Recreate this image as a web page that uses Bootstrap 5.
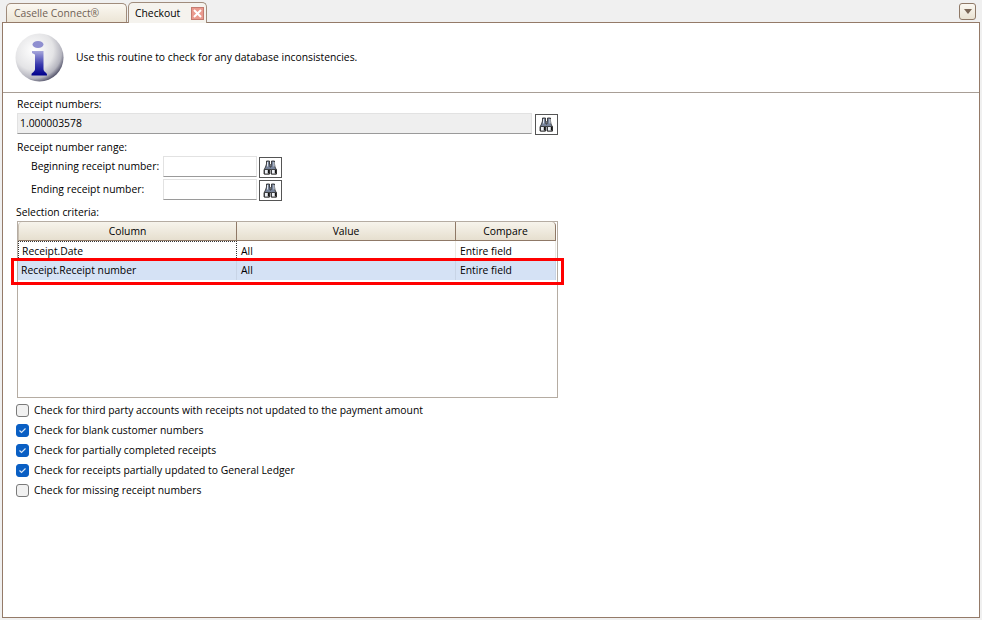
<!DOCTYPE html>
<html lang="en">
<head>
<meta charset="utf-8">
<title>Checkout</title>
<link rel="stylesheet" href="https://cdn.jsdelivr.net/npm/bootstrap@5.3.0/dist/css/bootstrap.min.css">
<style>
html,body{height:620px;overflow:hidden}
body{background:#f0f0f0;font-family:"Open Sans","Noto Sans",sans-serif;font-size:10.35px;line-height:13px;color:#000;padding:2px}
.appshell{height:616px;width:978px}
.tabstrip{height:20px;padding-left:4px;position:relative}
.tabitem{border:1px solid #a08c7c;border-bottom:0;border-radius:5px 5px 0 0}
.tab-off{width:121px;background:linear-gradient(#fbf8f2,#ece5d6);color:#6f6154;margin-top:1px;height:19px;padding:3px 0 0 7px}
.tab-on{width:79px;margin-left:1px;background:#f5f3ee;position:relative;z-index:2;height:21px;padding:4px 0 0 6px}
.tabclose{width:13px;height:13px;background:#ea9a8e;border:1px solid #c47b70;position:absolute;left:62px;top:4px}
.menubtn{width:17px;height:17px;border:1px solid #8f7967;border-radius:3px;background:linear-gradient(#fbf8f2,#e9e2d2);position:absolute;right:4px;top:1px}
.sheet{height:596px;background:#fff;border:1px solid #947a68}
.introband{height:70px;border-bottom:1px solid #a89e96;padding:10px 0 0 12px}
.introrow{gap:12px}
.workarea{padding:5px 0 0 14px;width:557px;position:relative}
.lbl{height:13px;margin:0}
.readrow{margin-top:2px;gap:3px}
.readbox{width:515px;height:21px;background:#efefef;border:1px solid #e2e2e2;border-bottom:1px solid #9a9a9a;padding:3px 0 0 2px}
.findbtn{width:23px;height:21px;padding:0;border:1px solid #555;border-radius:0;background:#fff;display:flex;align-items:center;justify-content:center;margin-top:1px}
.rangehead{margin-top:6px}
.rangerow{padding-left:14px;height:23px}
.rangerow-first{margin-top:2px}
.rangelbl{width:132px;padding-top:4px}
.rangebox{width:94px;height:21px;background:#fff;border:1px solid #e2e2e2;border-bottom:1px solid #9a9a9a;margin-right:2px}
.crithead{margin-top:4px;margin-left:-1px}
.gridframe{width:541px;height:177px;border:1px solid #b5aca2;margin-top:2px;position:relative}
.critgrid{table-layout:fixed;width:538px;border-collapse:separate;border-spacing:0;margin:0}
.critgrid th{height:19px;padding:0;font-weight:400;text-align:center;background:linear-gradient(#f7f4ec,#e6dfcf);border-right:1px solid #8f7967;border-bottom:1px solid #8f7967;vertical-align:middle}
.critgrid th:first-child{border-top-left-radius:4px;border-left:1px solid #c8bfb2}
.critgrid th:last-child{border-top-right-radius:4px}
.critgrid td{height:19px;padding:1px 0 0 4px;vertical-align:middle;border-right:1px solid #ece9e2;background:#fff}
.critgrid td:first-child{padding-left:3px}
.critgrid .firstcell{border:1px dotted #333;padding:1px 0 0 1px}
.critgrid .picked td{background:#d5e2f5;border-right-color:#c8d4e6;height:20px;padding-top:0}
.redmark{position:absolute;left:-7px;top:36px;width:553px;height:27px;border:3px solid #f00;pointer-events:none}
.checklist{margin-top:2px;margin-left:-1px}
.checkline{height:20px;gap:5px}
.checkline .form-check-input{width:13px;height:13px;margin:0;border-radius:3px;border:1px solid #7a7a7a;background-color:#f1f1f1;flex:none;opacity:1}
.checkline .form-check-input:checked{background-color:#0a5fc4;border-color:#0a5fc4;background-size:9px;background-image:url("data:image/svg+xml,%3csvg xmlns='http://www.w3.org/2000/svg' viewBox='0 0 9 9'%3e%3cpath fill='none' stroke='%23d7e6f7' stroke-width='1.2' d='M1.500 4.500l2 2 4-4'/%3e%3c/svg%3e")}
</style>
</head>
<body>
<div class="appshell d-flex flex-column">
  <div class="tabstrip d-flex">
    <div class="tabitem tab-off">Caselle Connect®</div>
    <div class="tabitem tab-on">Checkout
      <span class="tabclose d-flex align-items-center justify-content-center">
        <svg width="9" height="9" viewBox="0 0 9 9"><path d="M1 1l7 7M8 1l-7 7" stroke="#fff" stroke-width="2"/></svg>
      </span>
    </div>
    <div class="menubtn d-flex align-items-center justify-content-center">
      <svg width="8" height="5" viewBox="0 0 8 5"><path d="M0 0h8L4 5z" fill="#7a6656"/></svg>
    </div>
  </div>
  <div class="sheet">
    <div class="introband">
      <div class="introrow d-flex align-items-center">
      <svg width="49" height="49" viewBox="0 0 49 49">
        <defs>
          <radialGradient id="ballfill" cx="38%" cy="35%" r="68%"><stop offset="0" stop-color="#fff"/><stop offset=".6" stop-color="#e4e4e6"/><stop offset=".86" stop-color="#b4b4be"/><stop offset="1" stop-color="#5a5a70"/></radialGradient>
          <linearGradient id="glyphfill" x1="0" y1="0" x2="0" y2="1"><stop offset="0" stop-color="#a8a8dc"/><stop offset=".55" stop-color="#3a3aae"/><stop offset="1" stop-color="#00008c"/></linearGradient>
        </defs>
        <circle cx="24.500" cy="24.500" r="24" fill="url(#ballfill)"/>
        <ellipse cx="23" cy="11.500" rx="5.500" ry="3.500" fill="#8f8fd0"/>
        <path d="M17 18h11.500v18c0 3 3 3 3.500 5.500v1H16.500v-1c0-2 3.500-2.500 3.500-5.500V22c0-1.500-3-1-3-2.500z" fill="url(#glyphfill)"/>
      </svg>
      <div>Use this routine to check for any database inconsistencies.</div>
      </div>
    </div>
    <div class="workarea">
      <div class="lbl">Receipt numbers:</div>
      <div class="readrow d-flex align-items-start">
        <div class="readbox">1.000003578</div>
        <button type="button" class="btn findbtn"><svg width="17" height="15" viewBox="0 0 17 15"><use href="#binoc"/></svg></button>
      </div>
      <div class="lbl rangehead">Receipt number range:</div>
      <div class="rangerow rangerow-first d-flex align-items-start">
        <div class="rangelbl">Beginning receipt number:</div>
        <div class="rangebox"></div>
        <button type="button" class="btn findbtn"><svg width="17" height="15" viewBox="0 0 17 15"><use href="#binoc"/></svg></button>
      </div>
      <div class="rangerow d-flex align-items-start">
        <div class="rangelbl">Ending receipt number:</div>
        <div class="rangebox"></div>
        <button type="button" class="btn findbtn"><svg width="17" height="15" viewBox="0 0 17 15"><use href="#binoc"/></svg></button>
      </div>
      <div class="lbl crithead">Selection criteria:</div>
      <div class="gridframe">
        <table class="critgrid">
          <colgroup><col style="width:219px"><col style="width:219px"><col style="width:100px"></colgroup>
          <thead><tr><th>Column</th><th>Value</th><th>Compare</th></tr></thead>
          <tbody>
            <tr><td class="firstcell">Receipt.Date</td><td>All</td><td>Entire field</td></tr>
            <tr class="picked"><td>Receipt.Receipt number</td><td>All</td><td>Entire field</td></tr>
          </tbody>
        </table>
        <div class="redmark"></div>
      </div>
      <div class="checklist d-flex flex-column">
        <label class="checkline d-flex align-items-center"><input class="form-check-input" type="checkbox" disabled>Check for third party accounts with receipts not updated to the payment amount</label>
        <label class="checkline d-flex align-items-center"><input class="form-check-input" type="checkbox" checked disabled>Check for blank customer numbers</label>
        <label class="checkline d-flex align-items-center"><input class="form-check-input" type="checkbox" checked disabled>Check for partially completed receipts</label>
        <label class="checkline d-flex align-items-center"><input class="form-check-input" type="checkbox" checked disabled>Check for receipts partially updated to General Ledger</label>
        <label class="checkline d-flex align-items-center"><input class="form-check-input" type="checkbox" disabled>Check for missing receipt numbers</label>
      </div>
    </div>
  </div>
</div>
<svg width="0" height="0" class="d-none" aria-hidden="true">
  <defs>
    <symbol id="binoc" viewBox="0 0 17 15">
      <path d="M4.500 1h3v3h.500v3h1V4h.500V1h3v3l.500 3 1.500 3v4h-5.500V9.500h-1.500V14H2v-4l1.500-3 1-3z" fill="#77839a" stroke="#222" stroke-width=".8"/>
      <path d="M2.500 9.500h5V14h-5zM9.500 9.500h5V14h-5z" fill="#eef1f6" stroke="#222" stroke-width=".8"/>
      <path d="M5.500 2v4.500M12 2v4.500" stroke="#dfe5ee" stroke-width="1"/>
      <path d="M6.500 10v3.500M13.500 10v3.500" stroke="#111" stroke-width="1.400"/>
    </symbol>
  </defs>
</svg>
</body>
</html>
